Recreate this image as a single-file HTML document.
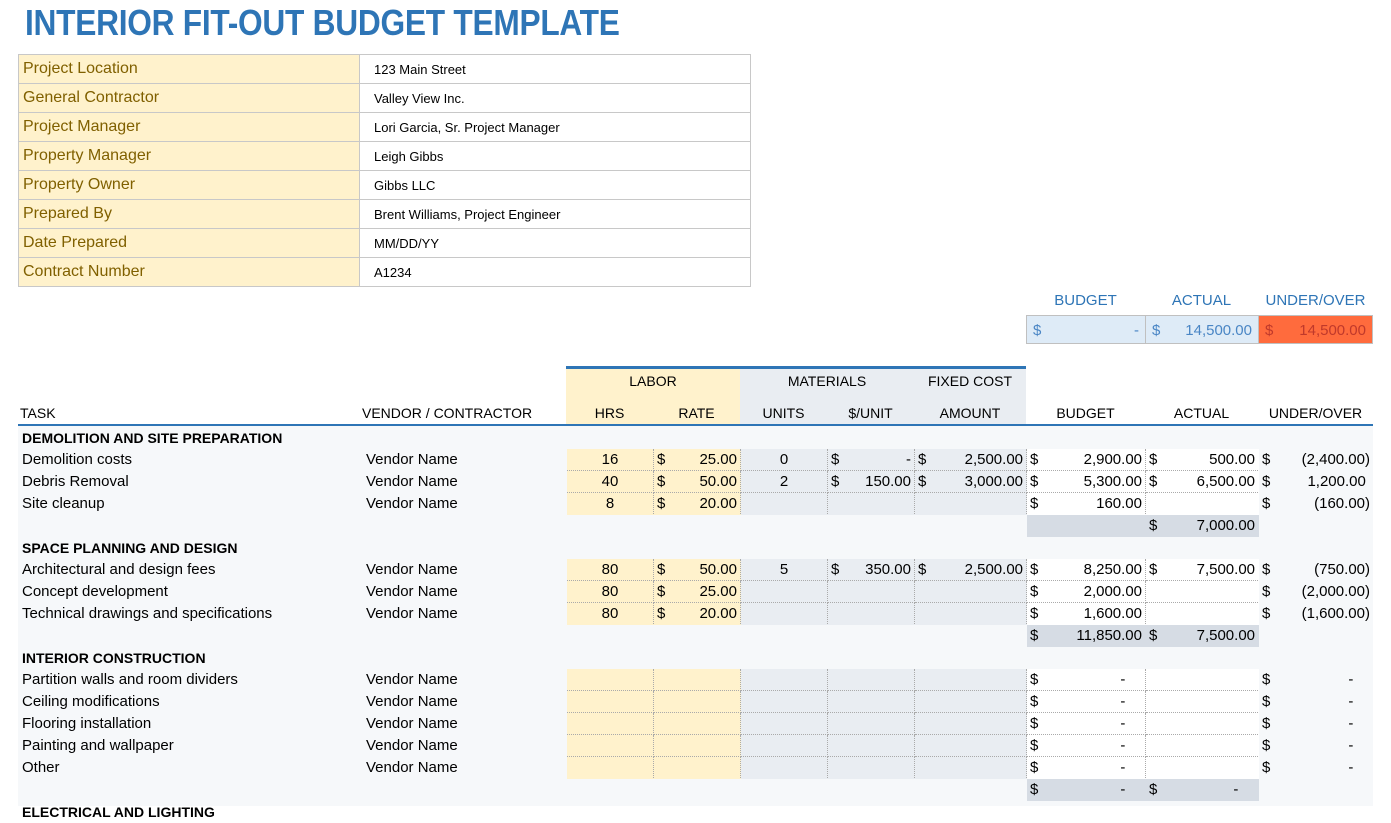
<!DOCTYPE html>
<html><head><meta charset="utf-8"><style>
body{margin:0;width:1391px;height:804px;overflow:hidden;background:#fff;font-family:"Liberation Sans",sans-serif;position:relative}
.title{position:absolute;left:25px;top:2px;font-size:36px;font-weight:bold;color:#2e75b6;transform:scaleX(.88);transform-origin:left;white-space:nowrap;letter-spacing:-.3px}
.info{position:absolute;left:18px;top:54px;border-collapse:collapse}
.info td{height:28px;border:1px solid #c8c8c8;padding:0 4px;font-size:13px;color:#000}
.info td.k{width:332px;background:#fff2cc;color:#806000;font-size:16px}
.info td.v{width:372px;padding-left:14px}
.sl{position:absolute;top:292px;font-size:15px;color:#2e75b6;text-align:center}
.sb{position:absolute;top:315px;height:29px;line-height:29px;font-size:15px;color:#4a86c5;border:1px solid #c0c0c0;box-sizing:border-box;padding:0 6px;text-align:right}
.sb i{float:left;font-style:normal}
.bg{position:absolute;left:18px;top:426px;width:1355px;height:380px;background:#f6f8fa}
.hl{position:absolute;background:#2e75b6}
.hc{position:absolute;font-size:14px;color:#000;text-align:center}
table.m{position:absolute;left:18px;top:426px;border-collapse:collapse;table-layout:fixed;font-size:15px}
table.m td{height:21px;padding:0 3px;white-space:nowrap;border:1px solid transparent;text-align:right;line-height:20px}
table.m td i{float:left;font-style:normal}
td.t{text-align:left!important}
td.h{font-weight:bold;font-size:14px}
td.L{background:#fff2cc;border:1px dotted #aaa!important}
td.M{background:#e9edf2;border:1px dotted #aaa!important}
td.W{background:#fff;border:1px dotted #aaa!important}
td.C{text-align:center!important}
td.S{background:#d6dce4}
</style></head><body>
<div class="title">INTERIOR FIT-OUT BUDGET TEMPLATE</div>
<table class="info">
<tr><td class="k">Project Location</td><td class="v">123 Main Street</td></tr>
<tr><td class="k">General Contractor</td><td class="v">Valley View Inc.</td></tr>
<tr><td class="k">Project Manager</td><td class="v">Lori Garcia, Sr. Project Manager</td></tr>
<tr><td class="k">Property Manager</td><td class="v">Leigh Gibbs</td></tr>
<tr><td class="k">Property Owner</td><td class="v">Gibbs LLC</td></tr>
<tr><td class="k">Prepared By</td><td class="v">Brent Williams, Project Engineer</td></tr>
<tr><td class="k">Date Prepared</td><td class="v">MM/DD/YY</td></tr>
<tr><td class="k">Contract Number</td><td class="v">A1234</td></tr>
</table>
<div class="sl" style="left:1026px;width:119px">BUDGET</div>
<div class="sl" style="left:1145px;width:113px">ACTUAL</div>
<div class="sl" style="left:1258px;width:115px">UNDER/OVER</div>
<div class="sb" style="left:1026px;width:120px;background:#deebf7"><i>$</i>-</div>
<div class="sb" style="left:1145px;width:114px;background:#deebf7"><i>$</i>14,500.00</div>
<div class="sb" style="left:1258px;width:115px;background:#ff6b3d;color:#c0392b"><i>$</i>14,500.00</div>

<div class="hl" style="left:566px;top:366px;width:460px;height:3px"></div>
<div style="position:absolute;left:566px;top:369px;width:174px;height:55px;background:#fff2cc"></div>
<div style="position:absolute;left:740px;top:369px;width:286px;height:55px;background:#e9edf2"></div>
<div class="hc" style="left:566px;top:373px;width:174px">LABOR</div>
<div class="hc" style="left:740px;top:373px;width:174px">MATERIALS</div>
<div class="hc" style="left:914px;top:373px;width:112px">FIXED COST</div>
<div class="hc" style="left:20px;top:405px;text-align:left">TASK</div>
<div class="hc" style="left:362px;top:405px;text-align:left">VENDOR / CONTRACTOR</div>
<div class="hc" style="left:566px;top:405px;width:87px">HRS</div>
<div class="hc" style="left:653px;top:405px;width:87px">RATE</div>
<div class="hc" style="left:740px;top:405px;width:87px">UNITS</div>
<div class="hc" style="left:827px;top:405px;width:87px">$/UNIT</div>
<div class="hc" style="left:914px;top:405px;width:112px">AMOUNT</div>
<div class="hc" style="left:1026px;top:405px;width:119px">BUDGET</div>
<div class="hc" style="left:1145px;top:405px;width:113px">ACTUAL</div>
<div class="hc" style="left:1258px;top:405px;width:115px">UNDER/OVER</div>
<div class="bg"></div>
<div class="hl" style="left:18px;top:424px;width:1355px;height:2px"></div>

<table class="m">
<colgroup><col style="width:344px"><col style="width:204px"><col style="width:87px"><col style="width:87px"><col style="width:87px"><col style="width:87px"><col style="width:112px"><col style="width:119px"><col style="width:113px"><col style="width:115px"></colgroup>
<tr><td class="t h" colspan="10">DEMOLITION AND SITE PREPARATION</td></tr>
<tr><td class="t">Demolition costs</td><td class="t">Vendor Name</td><td class="L C">16</td><td class="L"><i>$</i>25.00</td><td class="M C">0</td><td class="M"><i>$</i>-</td><td class="M"><i>$</i>2,500.00</td><td class="W"><i>$</i>2,900.00</td><td class="W"><i>$</i>500.00</td><td><i>$</i>(2,400.00)</td></tr>
<tr><td class="t">Debris Removal</td><td class="t">Vendor Name</td><td class="L C">40</td><td class="L"><i>$</i>50.00</td><td class="M C">2</td><td class="M"><i>$</i>150.00</td><td class="M"><i>$</i>3,000.00</td><td class="W"><i>$</i>5,300.00</td><td class="W"><i>$</i>6,500.00</td><td><i>$</i>1,200.00&nbsp;</td></tr>
<tr><td class="t">Site cleanup</td><td class="t">Vendor Name</td><td class="L C">8</td><td class="L"><i>$</i>20.00</td><td class="M"></td><td class="M"></td><td class="M"></td><td class="W"><i>$</i>160.00</td><td class="W"></td><td><i>$</i>(160.00)</td></tr>
<tr><td></td><td></td><td></td><td></td><td></td><td></td><td></td><td class="S"></td><td class="S"><i>$</i>7,000.00</td><td></td></tr>
<tr><td class="t h" colspan="10">SPACE PLANNING AND DESIGN</td></tr>
<tr><td class="t">Architectural and design fees</td><td class="t">Vendor Name</td><td class="L C">80</td><td class="L"><i>$</i>50.00</td><td class="M C">5</td><td class="M"><i>$</i>350.00</td><td class="M"><i>$</i>2,500.00</td><td class="W"><i>$</i>8,250.00</td><td class="W"><i>$</i>7,500.00</td><td><i>$</i>(750.00)</td></tr>
<tr><td class="t">Concept development</td><td class="t">Vendor Name</td><td class="L C">80</td><td class="L"><i>$</i>25.00</td><td class="M"></td><td class="M"></td><td class="M"></td><td class="W"><i>$</i>2,000.00</td><td class="W"></td><td><i>$</i>(2,000.00)</td></tr>
<tr><td class="t">Technical drawings and specifications</td><td class="t">Vendor Name</td><td class="L C">80</td><td class="L"><i>$</i>20.00</td><td class="M"></td><td class="M"></td><td class="M"></td><td class="W"><i>$</i>1,600.00</td><td class="W"></td><td><i>$</i>(1,600.00)</td></tr>
<tr><td></td><td></td><td></td><td></td><td></td><td></td><td></td><td class="S"><i>$</i>11,850.00</td><td class="S"><i>$</i>7,500.00</td><td></td></tr>
<tr><td class="t h" colspan="10">INTERIOR CONSTRUCTION</td></tr>
<tr><td class="t">Partition walls and room dividers</td><td class="t">Vendor Name</td><td class="L"></td><td class="L"></td><td class="M"></td><td class="M"></td><td class="M"></td><td class="W"><i>$</i>-&nbsp;&nbsp;&nbsp;&nbsp;</td><td class="W"></td><td><i>$</i>-&nbsp;&nbsp;&nbsp;&nbsp;</td></tr>
<tr><td class="t">Ceiling modifications</td><td class="t">Vendor Name</td><td class="L"></td><td class="L"></td><td class="M"></td><td class="M"></td><td class="M"></td><td class="W"><i>$</i>-&nbsp;&nbsp;&nbsp;&nbsp;</td><td class="W"></td><td><i>$</i>-&nbsp;&nbsp;&nbsp;&nbsp;</td></tr>
<tr><td class="t">Flooring installation</td><td class="t">Vendor Name</td><td class="L"></td><td class="L"></td><td class="M"></td><td class="M"></td><td class="M"></td><td class="W"><i>$</i>-&nbsp;&nbsp;&nbsp;&nbsp;</td><td class="W"></td><td><i>$</i>-&nbsp;&nbsp;&nbsp;&nbsp;</td></tr>
<tr><td class="t">Painting and wallpaper</td><td class="t">Vendor Name</td><td class="L"></td><td class="L"></td><td class="M"></td><td class="M"></td><td class="M"></td><td class="W"><i>$</i>-&nbsp;&nbsp;&nbsp;&nbsp;</td><td class="W"></td><td><i>$</i>-&nbsp;&nbsp;&nbsp;&nbsp;</td></tr>
<tr><td class="t">Other</td><td class="t">Vendor Name</td><td class="L"></td><td class="L"></td><td class="M"></td><td class="M"></td><td class="M"></td><td class="W"><i>$</i>-&nbsp;&nbsp;&nbsp;&nbsp;</td><td class="W"></td><td><i>$</i>-&nbsp;&nbsp;&nbsp;&nbsp;</td></tr>
<tr><td></td><td></td><td></td><td></td><td></td><td></td><td></td><td class="S"><i>$</i>-&nbsp;&nbsp;&nbsp;&nbsp;</td><td class="S"><i>$</i>-&nbsp;&nbsp;&nbsp;&nbsp;</td><td></td></tr>
<tr><td class="t h" colspan="10">ELECTRICAL AND LIGHTING</td></tr>
</table>
</body></html>
